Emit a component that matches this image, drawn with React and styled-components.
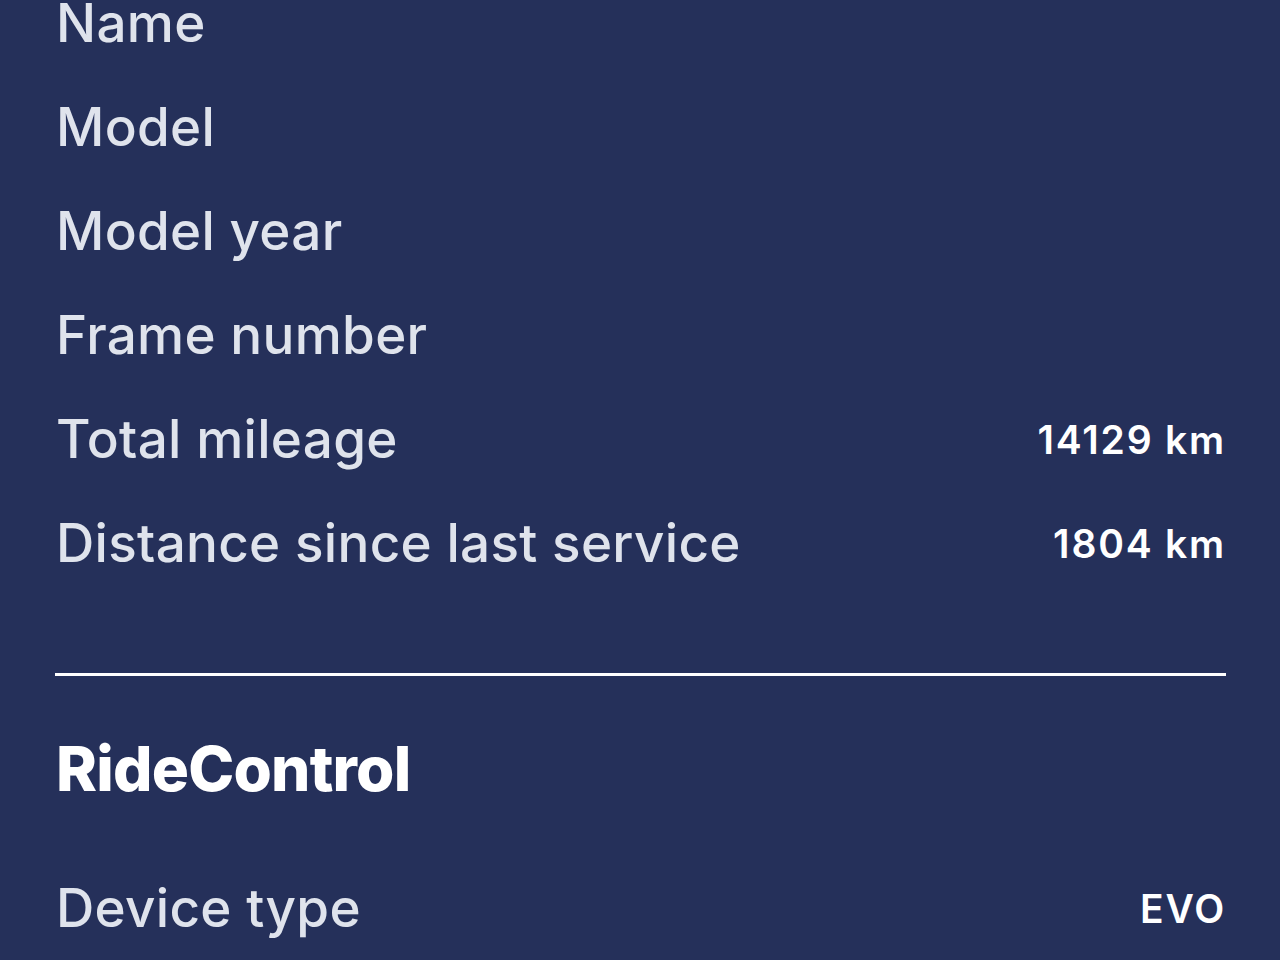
import React from "react";
import styled, { createGlobalStyle } from "styled-components";

const Global = createGlobalStyle`
  html, body { margin: 0; padding: 0; background: #25305a; }
  body { font-family: Inter, "Noto Sans", sans-serif; -webkit-font-smoothing: antialiased; }
`;

const Page = styled.div`
  width: 1280px;
  height: 960px;
  overflow: hidden;
  background: #25305a;
  box-sizing: border-box;
  padding: 0 55px 0 56px;
`;

const List = styled.div`
  display: flex;
  flex-direction: column;
  margin-top: ${(p) => p.$offset || 0}px;
`;

const Row = styled.div`
  height: 104px;
  display: flex;
  align-items: center;
  justify-content: space-between;
`;

const Label = styled.span`
  font-size: 53px;
  font-weight: 500;
  color: #dfe3ec;
  letter-spacing: 0.3px;
  line-height: 1;
`;

const Value = styled.span`
  font-size: 39px;
  font-weight: 600;
  color: #ffffff;
  letter-spacing: 1.8px;
  margin-right: -1px;
  line-height: 1;
`;

const Divider = styled.hr`
  border: none;
  height: 3px;
  background: #ffffff;
  margin: 78px -1px 0 -1px;
`;

const Heading = styled.h2`
  margin: 0;
  padding-top: 6px;
  height: 174px;
  display: flex;
  align-items: center;
  font-size: 62px;
  font-weight: 800;
  color: #ffffff;
  letter-spacing: -0.8px;
  line-height: 1;
`;

const bike = [
  ["Name", ""],
  ["Model", ""],
  ["Model year", ""],
  ["Frame number", ""],
  ["Total mileage", "14129 km"],
  ["Distance since last service", "1804 km"],
];

export default function App() {
  return (
    <>
      <Global />
      <Page>
        <List $offset={-29}>
          {bike.map(([l, v]) => (
            <Row key={l}>
              <Label>{l}</Label>
              {v && <Value>{v}</Value>}
            </Row>
          ))}
        </List>
        <Divider />
        <Heading>RideControl</Heading>
        <List>
          <Row>
            <Label>Device type</Label>
            <Value>EVO</Value>
          </Row>
        </List>
      </Page>
    </>
  );
}
